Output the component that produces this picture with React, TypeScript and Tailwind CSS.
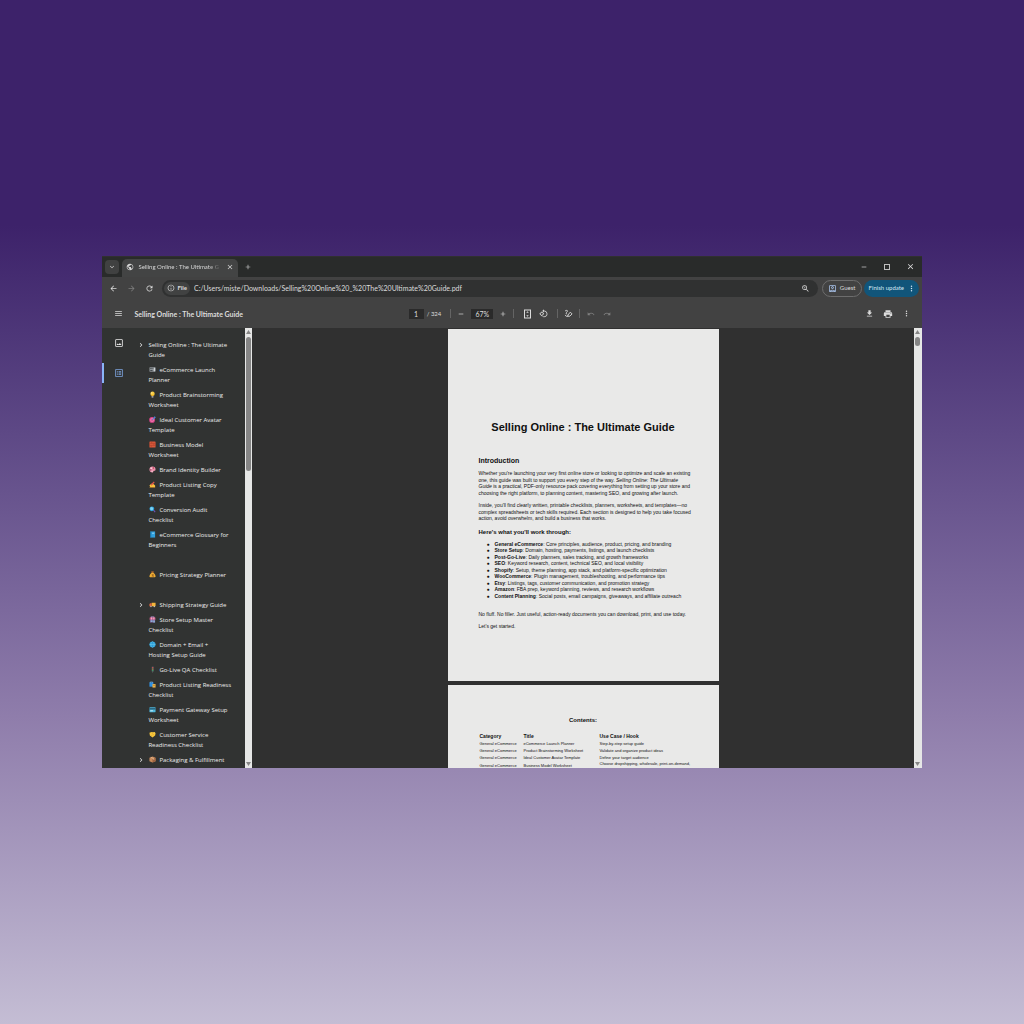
import React from "react";
import {
  MdAdd,
  MdArrowBack,
  MdArrowForward,
  MdClose,
  MdDownload,
  MdInfoOutline,
  MdKeyboardArrowDown,
  MdListAlt,
  MdMenu,
  MdMoreVert,
  MdOutlineAccountBox,
  MdOutlineImage,
  MdPrint,
  MdPublic,
  MdRedo,
  MdRefresh,
  MdRemove,
  MdRotate90DegreesCcw,
  MdUndo,
  MdZoomIn,
  MdChevronRight,
} from "react-icons/md";

const glyphs: Record<string, React.ReactNode> = {
  launch: (
    <>
      <rect x="1" y="3" width="14" height="10" rx="1" fill="#8d9397" />
      <path d="M3 5h3v2H3zM3 9h5v2H3zM8 5h2v2H8z" fill="#2f3437" />
      <path d="M11 4h3v8h-3z" fill="#cfd4d6" />
    </>
  ),
  bulb: (
    <>
      <circle cx="8" cy="6" r="5" fill="#f8c93a" />
      <path d="M6 9h4v3H6z" fill="#f3b02a" />
      <path d="M6 12h4v3H6z" fill="#b9bcc0" />
      <circle cx="6.500" cy="4.500" r="1.500" fill="#fff0b0" />
    </>
  ),
  target: (
    <>
      <circle cx="7" cy="9" r="6.500" fill="#e0458b" />
      <circle cx="7" cy="9" r="4" fill="#f08fbb" />
      <circle cx="7" cy="9" r="2" fill="#d9367f" />
      <path d="M7 9l5-6 1-2 1 1 1 1-2 2z" fill="#4a8fe0" stroke="#4a8fe0" strokeWidth="1" />
    </>
  ),
  brick: (
    <>
      <rect x="1" y="1" width="14" height="14" rx="1" fill="#d9583a" />
      <path d="M1 5.500h14M1 10h14M6 1v4.500M11 5.500V10M5 10v5" stroke="#a63c28" strokeWidth="1" />
    </>
  ),
  palette: (
    <>
      <path d="M8 1a7 7 0 100 14c2 0 1-2 2-3s5 0 5-4a7 7 0 00-7-7z" fill="#e88fa8" />
      <circle cx="5" cy="5" r="1.500" fill="#fff" />
      <circle cx="10" cy="4.500" r="1.500" fill="#b5304f" />
      <circle cx="4" cy="9" r="1.500" fill="#8a2d57" />
      <circle cx="7" cy="12" r="1.500" fill="#f5d7df" />
    </>
  ),
  writing: (
    <>
      <path d="M1 10l4-4 5 1 4 3v4H3z" fill="#f7c23c" />
      <path d="M4 8l7-7 2 2-7 8z" fill="#e2574b" />
      <path d="M1 14h13v1H1z" fill="#e58f2b" />
    </>
  ),
  magnifier: (
    <>
      <path d="M9 9l2-1 4 5-2 2z" fill="#7551b8" />
      <circle cx="6.500" cy="6.500" r="5.500" fill="#2c9fdb" />
      <circle cx="6" cy="6" r="3.500" fill="#7dd3f3" />
    </>
  ),
  book: (
    <>
      <path d="M3 1h11v14H3z" fill="#2f9fdd" />
      <path d="M3 1h2v14H3z" fill="#1a71a8" />
      <path d="M7 4h5v2H7z" fill="#a9ddf5" />
    </>
  ),
  bag: (
    <>
      <path d="M6 4h4c4 3 5 6 5 9 0 2-14 2-14 0 0-3 1-6 5-9z" fill="#f0ae35" />
      <path d="M5 1h6l-1 3H6z" fill="#dd7d29" />
      <path d="M6 8h4v1.500H7v1h3v3H6" stroke="#7c4a16" strokeWidth="1" fill="none" />
    </>
  ),
  truck: (
    <>
      <path d="M6 4h9v8H6z" fill="#f3b43a" />
      <path d="M1 7l2-2h3v7H1z" fill="#e46942" />
      <circle cx="4.500" cy="12.500" r="1.500" fill="#ced2d4" />
      <circle cx="12" cy="12.500" r="1.500" fill="#ced2d4" />
    </>
  ),
  store: (
    <>
      <path d="M2 7h12v8H2z" fill="#82659c" />
      <path d="M2 3h12l1 5H1z" fill="#d9608f" />
      <path d="M5 3h2v5H5zM10 3h2v5h-2z" fill="#eebdd0" />
      <path d="M4 10h4v3H4zM10 10h3v5h-3z" fill="#8cc9ea" />
      <path d="M4 1h8v2H4z" fill="#a98bc2" />
    </>
  ),
  globe: (
    <>
      <circle cx="8" cy="8" r="7" fill="#2b9fd8" />
      <path d="M1 8h14M8 1c-5 4-5 10 0 14M8 1c5 4 5 10 0 14" stroke="#7fd2f0" strokeWidth="1" fill="none" />
    </>
  ),
  light: (
    <>
      <rect x="6" y="1" width="5" height="12" rx="1" fill="#50585c" />
      <circle cx="8.500" cy="3.500" r="1.500" fill="#e8484e" />
      <circle cx="8.500" cy="7" r="1.500" fill="#c49035" />
      <circle cx="8.500" cy="10.500" r="1.500" fill="#3daf6a" />
      <path d="M8 13h1v2H8z" fill="#8c9396" />
    </>
  ),
  bags: (
    <>
      <path d="M1 3h9v10H1z" fill="#2f8fe0" />
      <path d="M3 5V2h5v3" stroke="#8fc6f4" fill="none" />
      <path d="M8 7h7v8H8z" fill="#efb549" />
      <path d="M10 9c0 3 3 3 3 0" stroke="#9a5b1d" fill="none" />
    </>
  ),
  card: (
    <>
      <rect x="1" y="3" width="14" height="11" rx="1" fill="#4fb7dc" />
      <path d="M1 5h14v3H1z" fill="#22566f" />
      <path d="M3 10h6v2H3z" fill="#d5f1fa" />
    </>
  ),
  hands: (
    <>
      <path d="M1 4l5-2 3 1 4-1 2 3-1 5-6 5-6-5z" fill="#f8c83d" />
      <path d="M6 5l3 2 3 3M5 9l3 3" stroke="#cf8a20" strokeWidth="1" fill="none" />
    </>
  ),
  box: (
    <>
      <path d="M8 1l7 3v8l-7 3-7-3V4z" fill="#c98a5a" />
      <path d="M8 7l7-3v8l-7 3z" fill="#9d6340" />
      <path d="M4 3l7 3v3" stroke="#ecc9a4" strokeWidth="1.500" fill="none" />
    </>
  ),
};

function Glyph({ name }: { name: string }) {
  return (
    <svg viewBox="0 0 16 16" className="mr-[3px] ml-px inline-block size-[7px] align-[-1px]" aria-hidden="true">
      {glyphs[name]}
    </svg>
  );
}

type Entry = { icon?: string; lines: string[]; open?: boolean; gap?: boolean };

const outline: Entry[] = [
  { lines: ["Selling Online : The Ultimate", "Guide"], open: true },
  { icon: "launch", lines: ["eCommerce Launch", "Planner"] },
  { icon: "bulb", lines: ["Product Brainstorming", "Worksheet"] },
  { icon: "target", lines: ["Ideal Customer Avatar", "Template"] },
  { icon: "brick", lines: ["Business Model", "Worksheet"] },
  { icon: "palette", lines: ["Brand Identity Builder"] },
  { icon: "writing", lines: ["Product Listing Copy", "Template"] },
  { icon: "magnifier", lines: ["Conversion Audit", "Checklist"] },
  { icon: "book", lines: ["eCommerce Glossary for", "Beginners"], gap: true },
  { icon: "bag", lines: ["Pricing Strategy Planner"], gap: true },
  { icon: "truck", lines: ["Shipping Strategy Guide"], open: true },
  { icon: "store", lines: ["Store Setup Master", "Checklist"] },
  { icon: "globe", lines: ["Domain + Email +", "Hosting Setup Guide"] },
  { icon: "light", lines: ["Go-Live QA Checklist"] },
  { icon: "bags", lines: ["Product Listing Readiness", "Checklist"] },
  { icon: "card", lines: ["Payment Gateway Setup", "Worksheet"] },
  { icon: "hands", lines: ["Customer Service", "Readiness Checklist"] },
  { icon: "box", lines: ["Packaging & Fulfillment"], open: true },
];

const topics = [
  ["General eCommerce", "Core principles, audience, product, pricing, and branding"],
  ["Store Setup", "Domain, hosting, payments, listings, and launch checklists"],
  ["Post-Go-Live", "Daily planners, sales tracking, and growth frameworks"],
  ["SEO", "Keyword research, content, technical SEO, and local visibility"],
  ["Shopify", "Setup, theme planning, app stack, and platform-specific optimization"],
  ["WooCommerce", "Plugin management, troubleshooting, and performance tips"],
  ["Etsy", "Listings, tags, customer communication, and promotion strategy"],
  ["Amazon", "FBA prep, keyword planning, reviews, and research workflows"],
  ["Content Planning", "Social posts, email campaigns, giveaways, and affiliate outreach"],
];

const contents = [
  ["General eCommerce", "eCommerce Launch Planner", "Step-by-step setup guide"],
  ["General eCommerce", "Product Brainstorming Worksheet", "Validate and organize product ideas"],
  ["General eCommerce", "Ideal Customer Avatar Template", "Define your target audience"],
];

function ScrollTrack({ width, thumb }: { width: string; thumb: string }) {
  return (
    <div className={`flex shrink-0 flex-col items-center bg-[#e6e7e6] py-[2px] ${width}`} aria-hidden="true">
      <svg viewBox="0 0 5 4" className="h-[4px] w-[5px]" fill="#858585">
        <path d="M2.500 0L5 4H0z" />
      </svg>
      <div className={`mt-[3px] w-[5px] rounded-full bg-[#858585] ${thumb}`} />
      <svg viewBox="0 0 5 4" className="mt-auto h-[4px] w-[5px]" fill="#858585">
        <path d="M2.500 4L5 0H0z" />
      </svg>
    </div>
  );
}

function TabStrip() {
  return (
    <div className="flex h-[20px] items-end bg-[#292b2a] pl-[3px]">
      <button aria-label="Search tabs" className="mb-[3px] flex size-[14px] items-center justify-center rounded-[4px] bg-[#404141] text-[#d8d8d8]">
        <MdKeyboardArrowDown className="size-[8px]" />
      </button>
      <div className="ml-[3px] flex h-[18px] w-[116px] items-center rounded-t-[5px] bg-[#434444] pr-[4px] pb-[2px] pl-[4px] text-[#d6d6d6]">
        <MdPublic className="size-[8px] shrink-0" />
        <span className="ml-[4px] min-w-0 flex-1 mask-r-from-85% text-[6px] leading-[10px] whitespace-nowrap">
          Selling Online : The Ultimate G
        </span>
        <button aria-label="Close tab" className="ml-[5px]">
          <MdClose className="size-[8px]" />
        </button>
      </div>
      <button aria-label="New tab" className="mb-[6px] ml-[6px] text-[#d0d0d0]">
        <MdAdd className="size-[8px]" />
      </button>
      <div className="mr-[7px] mb-[6px] ml-auto flex items-center gap-[15px] text-[#dedede]">
        <button aria-label="Minimize">
          <MdRemove className="size-[8px]" />
        </button>
        <button aria-label="Maximize" className="flex size-[8px] items-center justify-center">
          <span className="size-[6px] border border-[#bebebe]" />
        </button>
        <button aria-label="Close">
          <MdClose className="size-[9px]" />
        </button>
      </div>
    </div>
  );
}

function AddressRow() {
  return (
    <div className="flex h-[22px] items-center bg-[#424242] pr-[3px] pl-[7px] text-[7px] leading-[10px] text-[#dcdcdc]">
      <button aria-label="Back">
        <MdArrowBack className="size-[9px]" />
      </button>
      <button aria-label="Forward" className="ml-[9px] text-[#7d7d7d]">
        <MdArrowForward className="size-[9px]" />
      </button>
      <button aria-label="Reload" className="ml-[9px]">
        <MdRefresh className="size-[9px]" />
      </button>
      <div className="ml-[8px] flex h-[17px] flex-1 items-center rounded-full bg-[#303131] pr-[8px] pl-[2px]">
        <button className="flex h-[13px] items-center gap-[2px] rounded-full bg-[#414242] px-[3px] text-[6px] font-bold">
          <MdInfoOutline className="size-[8px]" />
          File
        </button>
        <input
          aria-label="Address"
          className="ml-[4px] min-w-0 flex-1 bg-transparent outline-none"
          defaultValue="C:/Users/miste/Downloads/Selling%20Online%20_%20The%20Ultimate%20Guide.pdf"
        />
        <button aria-label="Zoom">
          <MdZoomIn className="size-[9px]" />
        </button>
      </div>
      <button className="ml-[4px] flex h-[17px] w-[40px] items-center justify-center gap-[3px] rounded-full border border-[#6d6d6d]">
        <MdOutlineAccountBox className="size-[9px] text-[#a9c3ec]" />
        <span className="text-[6px]">Guest</span>
      </button>
      <button className="ml-[2px] flex h-[17px] w-[55px] items-center justify-between rounded-full bg-[#11557a] pr-[3px] pl-[5px] text-[#d4e8f5]">
        <span className="text-[6px]">Finish update</span>
        <MdMoreVert className="size-[9px]" />
      </button>
    </div>
  );
}

function Divider() {
  return <span className="h-[9px] w-px bg-[#646464]" />;
}

function ViewerBar() {
  return (
    <div className="grid h-[29px] grid-cols-[1fr_auto_1fr] items-center bg-[#424242] pr-[11px] pl-[12px] text-[#dcdcdc]">
      <div className="flex items-center gap-[11px]">
        <button aria-label="Menu">
          <MdMenu className="size-[9px]" />
        </button>
        <h1 className="text-[7px] leading-[10px] font-bold">Selling Online : The Ultimate Guide</h1>
      </div>
      <div className="flex items-center pr-[5px] text-[7px] leading-[10px]">
        <input aria-label="Page number" defaultValue="1" className="h-[10px] w-[15px] bg-[#2a2a2a] text-center outline-none" />
        <span className="ml-[3px] text-[6px]">/ 324</span>
        <span className="ml-[9px] flex">
          <Divider />
        </span>
        <button aria-label="Zoom out" className="ml-[6px]">
          <MdRemove className="size-[8px]" />
        </button>
        <input aria-label="Zoom level" defaultValue="67%" className="ml-[6px] h-[10px] w-[22px] bg-[#2a2a2a] text-center outline-none" />
        <button aria-label="Zoom in" className="ml-[6px]">
          <MdAdd className="size-[8px]" />
        </button>
        <span className="ml-[6px] flex">
          <Divider />
        </span>
        <button aria-label="Fit to page" className="ml-[9px]">
          <svg viewBox="0 0 18 20" className="h-[10px] w-[9px]" fill="none" stroke="currentColor" strokeWidth="2">
            <rect x="3" y="2" width="12" height="16" />
            <path d="M9 4.500l2.500 3h-5zM9 15.500l2.500-3h-5z" fill="currentColor" stroke="none" />
          </svg>
        </button>
        <button aria-label="Rotate" className="ml-[7px]">
          <MdRotate90DegreesCcw className="size-[9px]" />
        </button>
        <span className="ml-[9px] flex">
          <Divider />
        </span>
        <button aria-label="Draw" className="ml-[6px]">
          <svg viewBox="0 0 20 20" className="size-[9px]" fill="none" stroke="currentColor" strokeWidth="2" strokeLinejoin="round" strokeLinecap="round">
            <path d="M3 4c3-2 6-1 4 2s-4 4-1 5M3 14c1 3 4 3 6 2" />
            <path d="M9 13l5-6 4 4-5 5H9z" />
          </svg>
        </button>
        <span className="ml-[6px] flex">
          <Divider />
        </span>
        <button aria-label="Undo" className="ml-[7px] text-[#808080]">
          <MdUndo className="size-[8px]" />
        </button>
        <button aria-label="Redo" className="ml-[8px] text-[#808080]">
          <MdRedo className="size-[8px]" />
        </button>
      </div>
      <div className="flex items-center justify-end gap-[9px]">
        <button aria-label="Download">
          <MdDownload className="size-[9px]" />
        </button>
        <button aria-label="Print">
          <MdPrint className="size-[10px]" />
        </button>
        <button aria-label="More actions">
          <MdMoreVert className="size-[9px]" />
        </button>
      </div>
    </div>
  );
}

function Sidebar() {
  return (
    <aside className="flex w-[150px] shrink-0 overflow-hidden bg-[#313332] text-[#ececec]">
      <div className="flex w-[34px] shrink-0 flex-col pt-[5px]">
        <button aria-label="Thumbnails" className="flex h-[20px] items-center justify-center">
          <MdOutlineImage className="size-[10px]" />
        </button>
        <button aria-label="Document outline" className="mt-[10px] flex h-[20px] items-center justify-center border-l-2 border-[#8ab4f8] pr-[2px] text-[#7ea5e0]">
          <MdListAlt className="size-[10px]" />
        </button>
      </div>
      <ul className="flex min-w-0 flex-1 flex-col gap-[5px] overflow-hidden pt-[12px] font-['Open_Sans','Noto_Sans',sans-serif] text-[6px] leading-[10px]">
        {outline.map((entry) => (
          <li key={entry.lines[0]} className={entry.gap ? "flex pb-[15px]" : "flex"}>
            <span className="flex h-[10px] w-[12px] shrink-0 items-center pl-px">
              {entry.open && <MdChevronRight className="size-[8px]" />}
            </span>
            <a href="#page" className="whitespace-nowrap">
              {entry.icon && <Glyph name={entry.icon} />}
              {entry.lines[0]}
              {entry.lines[1] && (
                <>
                  <br />
                  {entry.lines[1]}
                </>
              )}
            </a>
          </li>
        ))}
      </ul>
      <ScrollTrack width="w-[7px]" thumb="h-[134px]" />
    </aside>
  );
}

function Pages() {
  return (
    <div className="flex min-w-0 flex-1 flex-col items-center gap-[4px] overflow-hidden bg-[#303030] pt-px font-['Liberation_Sans',Arial,sans-serif] text-[#101010]">
      <article id="page" className="h-[352px] w-[271px] shrink-0 bg-[#e9e9e8] px-[31px] pt-[91px] text-[5px] leading-[1.3]">
        <h2 className="text-center text-[11px] leading-[14px] font-bold">Selling Online : The Ultimate Guide</h2>
        <h3 className="mt-[22px] text-[7px] leading-[9px] font-bold">Introduction</h3>
        <p className="mt-[5px] whitespace-nowrap">
          Whether you're launching your very first online store or looking to optimize and scale an existing
          <br />
          one, this guide was built to support you every step of the way. <em>Selling Online: The Ultimate</em>
          <br />
          <em>Guide</em> is a practical, PDF-only resource pack covering everything from setting up your store and
          <br />
          choosing the right platform, to planning content, mastering SEO, and growing after launch.
        </p>
        <p className="mt-[6px] whitespace-nowrap">
          Inside, you'll find clearly written, printable checklists, planners, worksheets, and templates—no
          <br />
          complex spreadsheets or tech skills required. Each section is designed to help you take focused
          <br />
          action, avoid overwhelm, and build a business that works.
        </p>
        <h3 className="mt-[6px] text-[6px] leading-[8px] font-bold">Here's what you'll work through:</h3>
        <ul className="mt-[5px]">
          {topics.map(([name, text]) => (
            <li key={name} className="flex whitespace-nowrap">
              <span className="w-[16px] shrink-0 pl-[8px]">●</span>
              <span>
                <strong>{name}</strong>: {text}
              </span>
            </li>
          ))}
        </ul>
        <p className="mt-[12px] whitespace-nowrap">No fluff. No filler. Just useful, action-ready documents you can download, print, and use today.</p>
        <p className="mt-[5px]">Let's get started.</p>
      </article>
      <article className="h-[352px] w-[271px] shrink-0 bg-[#e9e9e8] px-[32px] pt-[31px] text-[4px] leading-[5px]">
        <h2 className="text-center text-[6px] leading-[8px] font-bold">Contents:</h2>
        <table className="mt-[8px] w-full table-fixed text-left whitespace-nowrap">
          <thead className="text-[5px] leading-[8px]">
            <tr>
              <th className="w-[44px] font-bold">Category</th>
              <th className="w-[76px] font-bold">Title</th>
              <th className="font-bold">Use Case / Hook</th>
            </tr>
          </thead>
          <tbody>
            {contents.map((row) => (
              <tr key={row[1]}>
                {row.map((cell) => (
                  <td key={cell} className="pt-px pb-px">
                    {cell}
                  </td>
                ))}
              </tr>
            ))}
            <tr className="align-top">
              <td className="pt-[2px]">General eCommerce</td>
              <td className="pt-[2px]">Business Model Worksheet</td>
              <td>Choose dropshipping, wholesale, print-on-demand,</td>
            </tr>
          </tbody>
        </table>
      </article>
    </div>
  );
}

export default function App() {
  return (
    <div className="flex min-h-screen flex-col justify-center bg-linear-to-b from-[#3d226a] from-22% via-[#8f7dab] via-70% to-[#c4bdd4] px-[10vw] font-['Lato','Open_Sans',sans-serif]">
      <main className="flex h-[50vh] flex-col overflow-hidden bg-[#303030] pt-px">
        <TabStrip />
        <AddressRow />
        <ViewerBar />
        <div className="flex min-h-0 flex-1">
          <Sidebar />
          <Pages />
          <ScrollTrack width="w-[8px]" thumb="h-[9px]" />
        </div>
      </main>
    </div>
  );
}
